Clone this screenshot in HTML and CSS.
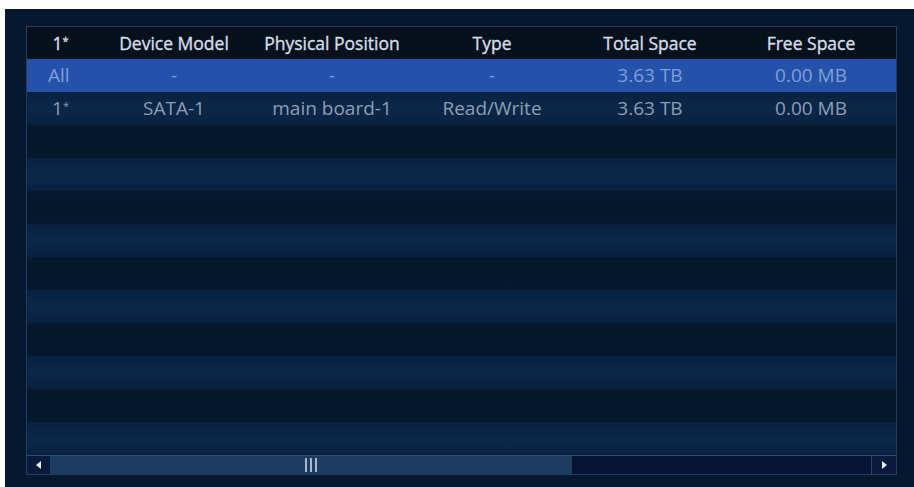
FILE: index.html
```html
<!DOCTYPE html>
<html>
<head>
<meta charset="utf-8">
<link rel="stylesheet" href="styles.css">
</head>
<body>
<div class="frame">
  <div class="table">
    <div class="row head">
      <div>1<sup>*</sup></div><div>Device Model</div><div>Physical Position</div><div>Type</div><div>Total Space</div><div>Free Space</div>
    </div>
    <div class="row sel">
      <div class="first">All</div><div>-</div><div>-</div><div>-</div><div>3.63 TB</div><div>0.00 MB</div>
    </div>
    <div class="row light">
      <div>1<sup>*</sup></div><div>SATA-1</div><div>main board-1</div><div>Read/Write</div><div>3.63 TB</div><div>0.00 MB</div>
    </div>
    <div class="row dark"></div>
    <div class="row light"></div>
    <div class="row dark"></div>
    <div class="row light"></div>
    <div class="row dark"></div>
    <div class="row light"></div>
    <div class="row dark"></div>
    <div class="row light"></div>
    <div class="row dark"></div>
    <div class="row light"></div>
    <div class="scrollbar">
      <div class="btn left"><svg width="6" height="8" viewBox="0 0 6 8"><path d="M5 0 L0 4 L5 8 Z" fill="#e8eef6"/></svg></div>
      <div class="thumb"><span class="grip"></span></div>
      <div class="track"></div>
      <div class="btn right"><svg width="6" height="8" viewBox="0 0 6 8"><path d="M1 0 L6 4 L1 8 Z" fill="#e8eef6"/></svg></div>
    </div>
  </div>
</div>
</body>
</html>
```

FILE: styles.css
```css
html, body {
  margin: 0;
  padding: 0;
  background: #ffffff;
}
body {
  font-family: "Open Sans", "Noto Sans", sans-serif;
}
.frame {
  margin: 9px 0 0 5px;
  width: 909px;
  height: 478px;
  box-sizing: border-box;
  padding: 17px 17px 12px 21px;
  background: #06182f;
}
.table {
  border: 1px solid #243d5c;
  display: flex;
  flex-direction: column;
  height: 449px;
  box-sizing: border-box;
}
.row {
  display: grid;
  grid-template-columns: 67px 160px 156px 164px 152px 1fr;
  height: 33px;
  align-items: center;
  text-align: center;
  font-size: 19px;
  color: #8d9fb4;
  white-space: nowrap;
}
.row > div {
  line-height: 33px;
}
.row sup {
  font-size: 11px;
  vertical-align: 5px;
  line-height: 0;
}
.head {
  height: 32px;
  background: #07111c;
  color: #d6dee8;
  font-size: 17.5px;
  font-weight: 500;
  -webkit-text-stroke: 0.35px #d6dee8;
}
.head > div {
  line-height: 32px;
}
.sel {
  background: #2451aa;
  color: #7f9fd8;
}
.sel .first {
  text-align: left;
  padding-left: 21px;
}
.light {
  background: linear-gradient(#092140, #0b2749 50%, #092140);
}
.dark {
  background: linear-gradient(#051a2f, #03162a 50%, #051a2f);
}
.scrollbar {
  flex: 1;
  display: flex;
  border-top: 1px solid #2c4b70;
  background: #081838;
}
.btn {
  width: 23px;
  display: flex;
  align-items: center;
  justify-content: center;
  background: #0a1a3c;
}
.btn.right {
  width: 24px;
  border-left: 1px solid #2a4466;
}
.thumb {
  width: 522px;
  background: #1c3c62;
  display: flex;
  align-items: center;
  justify-content: center;
}
.grip {
  width: 12px;
  height: 14px;
  background: repeating-linear-gradient(90deg, #c9d6e6 0 2px, transparent 2px 5px);
  opacity: 0.8;
}
.track {
  flex: 1;
  background: #071434;
}
```
